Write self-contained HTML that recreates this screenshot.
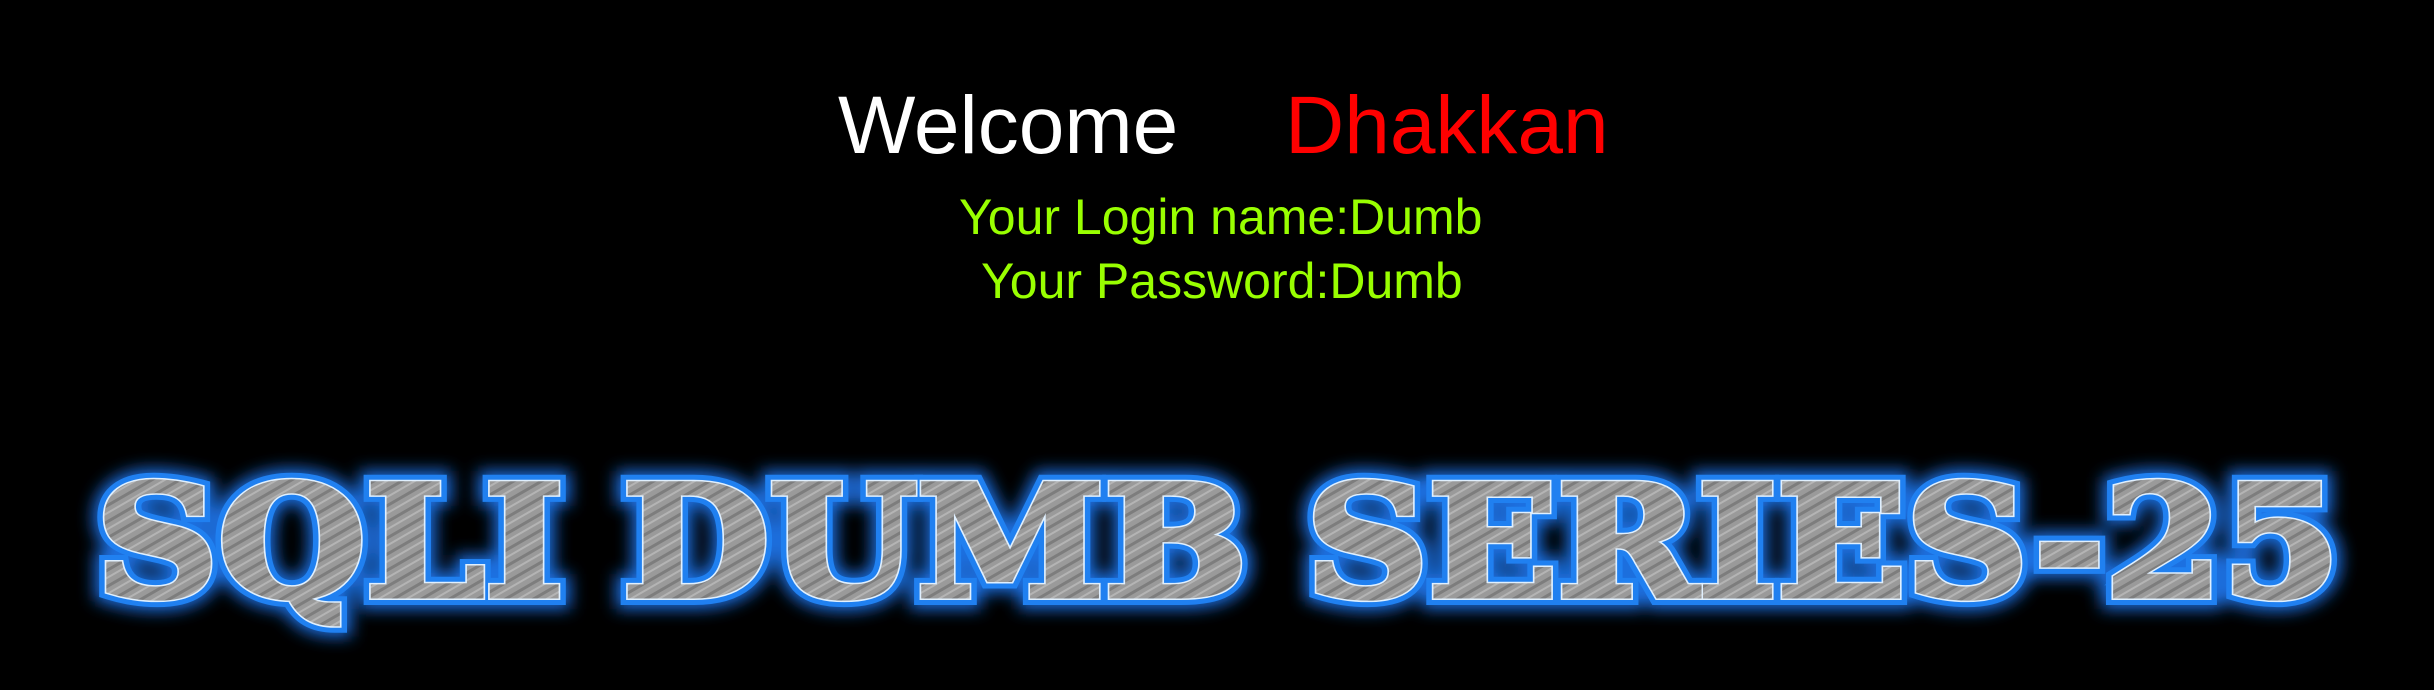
<!DOCTYPE html>
<html><head><style>
html,body{margin:0;padding:0;background:#000;width:2434px;height:690px;overflow:hidden}
.t{position:absolute;white-space:nowrap;font-family:"Liberation Sans",sans-serif;line-height:1}
</style></head><body>
<div class="t" style="left:838px;top:85px;font-size:82px;color:#fff">Welcome</div>
<div class="t" style="left:1285px;top:85px;font-size:82px;color:#f00">Dhakkan</div>
<div class="t" style="left:959px;top:192px;font-size:50px;color:#9f0">Your Login name:Dumb</div>
<div class="t" style="left:981px;top:256px;font-size:50px;color:#9f0">Your Password:Dumb</div>
<svg width="2434" height="690" style="position:absolute;left:0;top:0">
<defs>
<pattern id="p" width="14" height="14" patternUnits="userSpaceOnUse" patternTransform="rotate(60)">
<rect width="14" height="14" fill="#9a9a9a"/>
<rect width="3" height="14" fill="#7d7d7d"/>
<rect x="7" width="2" height="14" fill="#b4b4b4"/>
</pattern>
<filter id="g" x="-5%" y="-30%" width="110%" height="160%">
<feGaussianBlur stdDeviation="8"/>
</filter>
</defs>
<g font-family="DejaVu Serif" font-weight="bold" font-size="154">
<text x="96" y="596" textLength="2244" lengthAdjust="spacingAndGlyphs" fill="none" stroke="#1a6fe0" stroke-width="26" filter="url(#g)">SQLI DUMB SERIES-25</text>
<text x="96" y="596" textLength="2244" lengthAdjust="spacingAndGlyphs" fill="none" stroke="#2080f0" stroke-width="18">SQLI DUMB SERIES-25</text>
<text x="96" y="596" textLength="2244" lengthAdjust="spacingAndGlyphs" fill="none" stroke="#e0f0ff" stroke-width="8">SQLI DUMB SERIES-25</text>
<text x="96" y="596" textLength="2244" lengthAdjust="spacingAndGlyphs" fill="url(#p)" stroke="url(#p)" stroke-width="5">SQLI DUMB SERIES-25</text>
</g>
</svg>
</body></html>
